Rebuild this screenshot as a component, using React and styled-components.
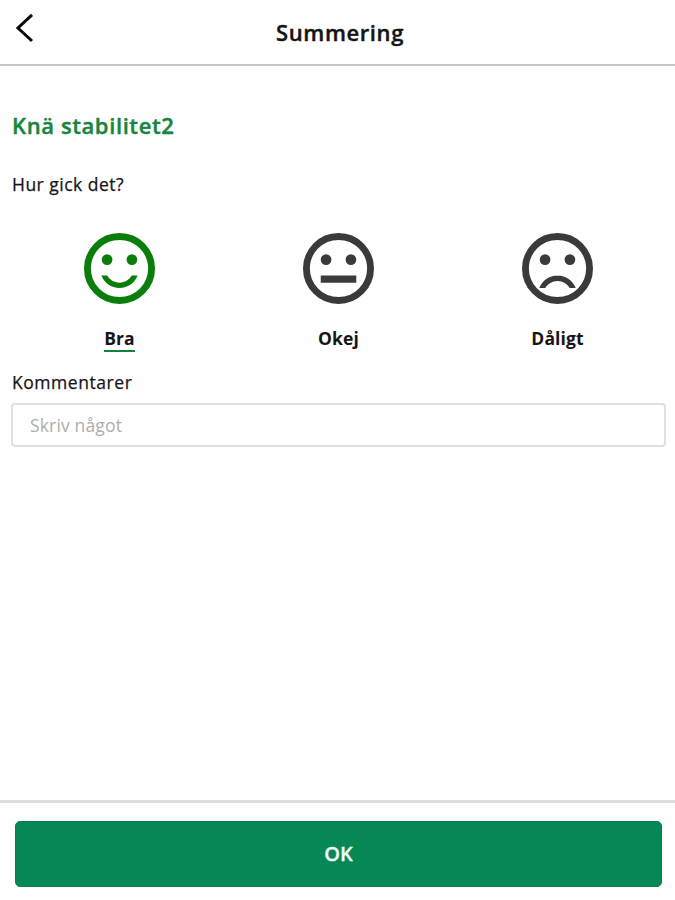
import React from "react";
import styled, { createGlobalStyle } from "styled-components";

const GlobalStyle = createGlobalStyle`
  * { box-sizing: border-box; }
  body {
    margin: 0;
    background: #fff;
    color: #151515;
    font-family: "Open Sans", "Noto Sans", sans-serif;
  }
`;

const Screen = styled.div`
  display: flex;
  flex-direction: column;
  height: 900px;
  background: #fefefe;
`;

const Header = styled.header`
  display: grid;
  grid-template-columns: 50px 1fr 50px;
  height: 66px;
  flex: none;
  border-bottom: 2px solid #c6c6c6;
`;

const BackButton = styled.button`
  align-self: start;
  padding: 13px 0 0 15px;
  border: 0;
  background: none;
  text-align: left;
  line-height: 0;
`;

const Title = styled.h1`
  margin: 0;
  padding-left: 5px;
  text-align: center;
  font-size: 22px;
  line-height: 64px;
  font-weight: 600;
  letter-spacing: 0.6px;
  -webkit-text-stroke: 0.4px currentColor;
`;

const Content = styled.main`
  flex: 1;
  padding: 43px 9px 0 11px;
`;

const Exercise = styled.h2`
  margin: 0 0 0 1px;
  color: #17853f;
  font-size: 22px;
  line-height: 32px;
  font-weight: 600;
  letter-spacing: 0.6px;
  -webkit-text-stroke: 0.4px currentColor;
`;

const Label = styled.label`
  display: block;
  margin: ${(p) => p.$top}px 0 0 1px;
  font-size: 17.5px;
  line-height: 24px;
  font-weight: 500;
  letter-spacing: ${(p) => p.$spacing}px;
  -webkit-text-stroke: 0.25px currentColor;
`;

const Ratings = styled.div`
  display: grid;
  grid-template-columns: repeat(3, 219px);
  margin: 37px 0 0 -1px;
`;

const Rating = styled.button`
  display: flex;
  flex-direction: column;
  align-items: center;
  padding: 0;
  border: 0;
  background: none;
  color: ${(p) => (p.$selected ? "#0b7d0b" : "#3a3a3c")};
  font-family: inherit;
`;

const RatingText = styled.span`
  margin-top: 22px;
  height: 26px;
  color: #151515;
  font-size: 17.5px;
  line-height: 25px;
  font-weight: 700;
  letter-spacing: 0.1px;
  border-bottom: 2px solid ${(p) => (p.$selected ? "#17803a" : "transparent")};
`;

const Comment = styled.input`
  display: block;
  width: 100%;
  height: 44px;
  margin-top: 9px;
  padding: 0 17px 1px;
  border: 2px solid #e0e0e0;
  border-radius: 4px;
  background: #fff;
  font-family: inherit;
  font-size: 17.5px;
  letter-spacing: 0.15px;
  outline: none;
  &::placeholder { color: #adadad; opacity: 1; }
`;

const Footer = styled.footer`
  flex: none;
  height: 100px;
  padding: 18px 13px 0 15px;
  border-top: 3px solid #dcdcdc;
`;

const Confirm = styled.button`
  display: block;
  width: 100%;
  height: 66px;
  padding: 0 0 1px;
  border: 1px solid #087f4a;
  border-radius: 5px;
  background: #058856;
  color: #f4fff6;
  font-family: inherit;
  font-size: 20px;
  font-weight: 600;
  -webkit-text-stroke: 0.3px currentColor;
`;

const mouths = {
  happy: "M12 16c-1.48 0-2.75-.81-3.45-2H6.88c.8 2.05 2.79 3.5 5.12 3.5s4.32-1.45 5.12-3.5h-1.67c-.7 1.19-1.97 2-3.45 2z",
  neutral: "M7 14h10v2H7z",
  sad: "M12 14c-2.33 0-4.32 1.45-5.12 3.5h1.67c.69-1.19 1.97-2 3.45-2s2.75.81 3.45 2h1.67c-.8-2.05-2.79-3.5-5.12-3.5z",
};

function Face({ mood }) {
  return (
    <svg width="71" height="71" viewBox="2 2 20 20" fill="currentColor" aria-hidden="true">
      <circle cx="12" cy="12" r="9.03" fill="none" stroke="currentColor" strokeWidth="1.94" />
      <circle cx="8.5" cy="9.5" r="1.5" />
      <circle cx="15.5" cy="9.5" r="1.5" />
      <path d={mouths[mood]} />
    </svg>
  );
}

const options = [
  { mood: "happy", text: "Bra", selected: true },
  { mood: "neutral", text: "Okej" },
  { mood: "sad", text: "Dåligt" },
];

export default function App() {
  return (
    <>
      <GlobalStyle />
      <Screen>
        <Header>
          <BackButton aria-label="Tillbaka">
            <svg width="19" height="30" viewBox="0 0 19 30" fill="none" stroke="#080808" strokeWidth="3">
              <path d="M17 1.8L3 15L17 28" />
            </svg>
          </BackButton>
          <Title>Summering</Title>
        </Header>
        <Content>
          <Exercise>Knä stabilitet2</Exercise>
          <Label as="p" $top={31} $spacing={0.48}>Hur gick det?</Label>
          <Ratings>
            {options.map((o) => (
              <Rating key={o.mood} $selected={o.selected}>
                <Face mood={o.mood} />
                <RatingText $selected={o.selected}>{o.text}</RatingText>
              </Rating>
            ))}
          </Ratings>
          <Label htmlFor="comment" $top={18} $spacing={0.55}>Kommentarer</Label>
          <Comment id="comment" placeholder="Skriv något" />
        </Content>
        <Footer>
          <Confirm>OK</Confirm>
        </Footer>
      </Screen>
    </>
  );
}
